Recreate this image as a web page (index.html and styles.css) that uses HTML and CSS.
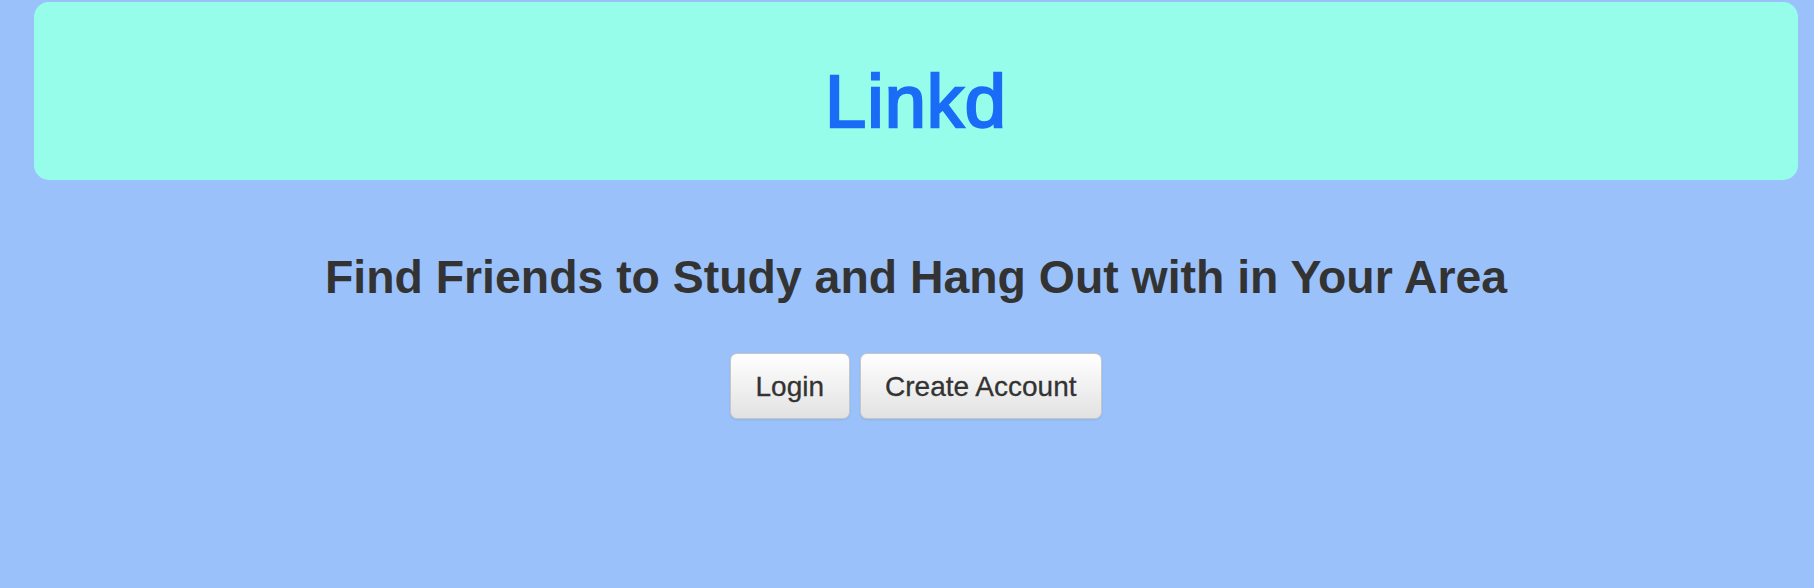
FILE: index.html
```html
<!DOCTYPE html>
<html lang="en">
<head>
<meta charset="utf-8">
<title>Linkd</title>
<link rel="stylesheet" href="styles.css">
</head>
<body>
  <header class="jumbotron">
    <h1 class="brand">Linkd</h1>
  </header>
  <main class="intro">
    <h2 class="tagline">Find Friends to Study and Hang Out with in Your Area</h2>
    <div class="actions">
      <button class="btn" type="button">Login</button>
      <button class="btn" type="button">Create Account</button>
    </div>
  </main>
</body>
</html>
```
FILE: styles.css
```css
html, body {
  margin: 0;
  padding: 0;
}
body {
  background: #9ac1fa;
  font-family: "Liberation Sans", Arial, sans-serif;
  color: #333333;
  min-height: 588px;
  padding: 2px 16px 0 34px;
  box-sizing: border-box;
}
.jumbotron {
  background: #96fdeb;
  border-radius: 15px;
  height: 178px;
  box-sizing: border-box;
  padding: 63px 0 0;
  text-align: center;
}
.brand {
  margin: 0;
  font-size: 74px;
  line-height: 74px;
  font-weight: normal;
  letter-spacing: 1px;
  color: #1a6cf7;
  -webkit-text-stroke: 2.4px #1a6cf7;
}
.intro {
  text-align: center;
}
.tagline {
  margin: 74px 0 0;
  font-size: 46.4px;
  line-height: 46px;
  font-weight: bold;
  color: #333333;
}
.actions {
  display: flex;
  justify-content: center;
  gap: 10px;
  margin-top: 53px;
}
.btn {
  font-family: "Liberation Sans", Arial, sans-serif;
  font-size: 28px;
  line-height: 30px;
  color: #333333;
  -webkit-text-stroke: 0.3px #333333;
  padding: 18px 24.5px 16px;
  border: 1.5px solid #c6c6c6;
  border-radius: 7px;
  background: linear-gradient(to bottom, #ffffff 0%, #e2e2e2 100%);
  box-shadow: 0 1px 2px rgba(0, 0, 0, 0.08);
  cursor: pointer;
}
```
